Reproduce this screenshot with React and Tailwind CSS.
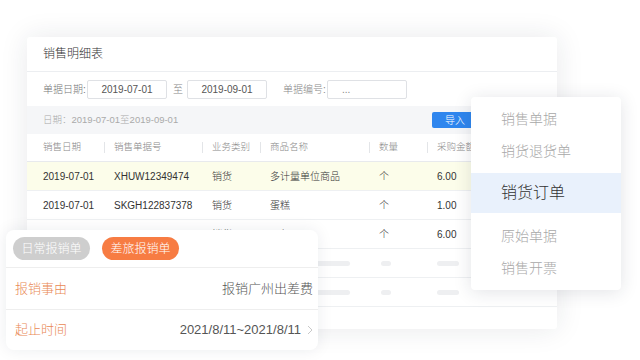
const font = { fontFamily: '"Liberation Sans", "Noto Sans CJK SC", sans-serif' };

const cols = ['w-[71px]', 'w-[98px]', 'w-[58px]', 'w-[109px]', 'w-[58px]', 'flex-1'];
const headers = ['销售日期', '销售单据号', '业务类别', '商品名称', '数量', '采购金额'];

const rows = [
  ['2019-07-01', 'XHUW12349474', '销货', '多计量单位商品', '个', '6.00'],
  ['2019-07-01', 'SKGH122837378', '销货', '蛋糕', '个', '1.00'],
  ['2019-07-01', 'XSHD122837366', '销货', '面包', '个', '6.00'],
];

function Chevron() {
  return (
    <svg width="6" height="10" viewBox="0 0 6 10" className="ml-[6px]">
      <polyline points="1,1 5,5 1,9" fill="none" stroke="#c8c8c8" strokeWidth="1" />
    </svg>
  );
}

function PlaceholderRow() {
  return (
    <div className="flex h-[29px] items-center border-b border-[#eef0f2] pl-4">
      <div className={cols[0]}><div className="h-[5px] w-[50px] rounded-full bg-[#eeeff1]" /></div>
      <div className={cols[1]}><div className="h-[5px] w-[70px] rounded-full bg-[#eeeff1]" /></div>
      <div className={cols[2]}><div className="h-[5px] w-[24px] rounded-full bg-[#eeeff1]" /></div>
      <div className={cols[3]}><div className="h-[5px] w-[80px] rounded-full bg-[#eeeff1]" /></div>
      <div className={cols[4]}><div className="ml-[2px] h-[5px] w-[10px] rounded-full bg-[#eeeff1]" /></div>
      <div className={cols[5]}><div className="h-[5px] w-[22px] rounded-full bg-[#eeeff1]" /></div>
    </div>
  );
}

export default function App() {
  return (
    <div className="relative h-[360px] w-[640px] overflow-hidden bg-white pl-[27px] pt-[37px] font-light" style={font}>
      {/* Main table card */}
      <div className="h-[292px] w-[530px] rounded-[3px] bg-white shadow-[0_0_28px_rgba(30,40,60,0.1)]">
        <div className="flex h-[35px] items-center border-b border-[#eceef1] px-4 text-[12px] text-[#333]">
          销售明细表
        </div>

        <div className="flex h-[34px] items-center px-4 text-[10px] text-[#777]">
          <span className="w-[44px]">单据日期:</span>
          <div className="flex h-[19px] w-[80px] items-center justify-center rounded-[2px] border border-[#dfe1e5] text-[#555]">2019-07-01</div>
          <span className="mx-[6px] w-[8px] text-[#888]">至</span>
          <div className="flex h-[19px] w-[80px] items-center justify-center rounded-[2px] border border-[#dfe1e5] text-[#555]">2019-09-01</div>
          <span className="ml-[16px] w-[44px] text-[#888]">单据编号:</span>
          <div className="flex h-[19px] w-[80px] items-center rounded-[2px] border border-[#dfe1e5] pl-[14px] text-[#888]">...</div>
        </div>

        <div className="flex h-[28px] items-center bg-[#f5f6f8] pl-4 text-[9.5px] text-[#aaa]">
          <span>日期：2019-07-01至2019-09-01</span>
          <div className="ml-auto mr-[79px] flex h-[16px] w-[46px] items-center justify-center rounded-[2px] bg-[#2f86ee] text-[10px] text-white">
            导入
          </div>
        </div>

        <div className="flex h-[28px] items-center border-b border-[#e8eaed] pl-4 text-[9.5px] text-[#888]">
          {headers.map((h, i) => (
            <div key={h} className={`${cols[i]} flex items-center justify-between pr-[9px]`}>
              <span>{h}</span>
              {i < 5 && <span className="h-[11px] w-px bg-[#e3e5e8]" />}
            </div>
          ))}
        </div>

        {rows.map((r, ri) => (
          <div
            key={ri}
            className={`flex h-[29px] items-center border-b border-[#eef0f2] pl-4 text-[10px] text-[#333] ${ri === 0 ? 'bg-[#fcfdea]' : ''}`}
          >
            {r.map((c, i) => (
              <div key={i} className={cols[i]}>{c}</div>
            ))}
          </div>
        ))}
        <PlaceholderRow />
        <PlaceholderRow />
      </div>

      {/* Dropdown menu */}
      <div className="absolute left-[471px] top-[97px] w-[150px] rounded-[4px] bg-white py-[6px] shadow-[0_2px_18px_rgba(30,40,60,0.13)]">
        <div className="flex h-[32px] items-center pl-[30px] text-[14px] text-[#a8a8a8]">销售单据</div>
        <div className="flex h-[32px] items-center pl-[30px] text-[14px] text-[#a8a8a8]">销货退货单</div>
        <div className="mt-[6px] flex h-[40px] items-center bg-[#e9f1fc] pl-[30px] text-[16px] text-[#333]">销货订单</div>
        <div className="mt-[7px] flex h-[32px] items-center pl-[30px] text-[14px] text-[#a8a8a8]">原始单据</div>
        <div className="flex h-[32px] items-center pl-[30px] text-[14px] text-[#a8a8a8]">销售开票</div>
      </div>

      {/* Expense card */}
      <div className="absolute left-[6px] top-[230px] w-[312px] rounded-[8px] bg-white shadow-[0_0_16px_rgba(30,40,60,0.08)]">
        <div className="flex h-[38px] items-center gap-3 border-b border-[#eeeeee] pl-[7px]">
          <div className="flex h-[23px] w-[77px] items-center justify-center rounded-full bg-[#cecece] text-[12px] text-white">日常报销单</div>
          <div className="flex h-[23px] w-[77px] items-center justify-center rounded-full bg-[#f77c43] text-[12px] text-white">差旅报销单</div>
        </div>
        <div className="flex h-[42px] items-center justify-between border-b border-[#eeeeee] pl-[9px] pr-[5px] text-[13px]">
          <span className="text-[#e98955]">报销事由</span>
          <span className="text-[#555]">报销广州出差费</span>
        </div>
        <div className="flex h-[40px] items-center justify-between pl-[9px] pr-[5px] text-[13px]">
          <span className="text-[#e98955]">起止时间</span>
          <span className="flex items-center text-[#555]">
            2021/8/11~2021/8/11
            <Chevron />
          </span>
        </div>
      </div>
    </div>
  );
}
